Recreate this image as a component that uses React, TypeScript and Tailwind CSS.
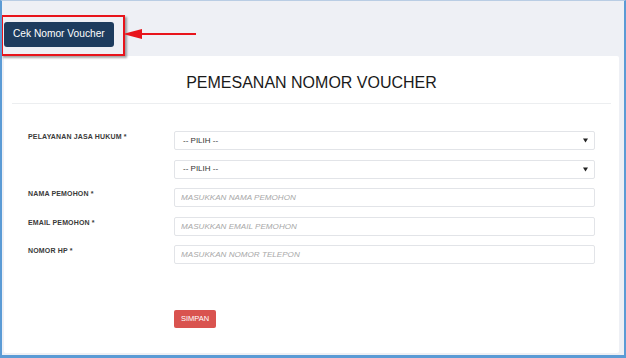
import { ChangeEvent, useState } from 'react';

const fields = [
  { label: 'NAMA PEMOHON *', placeholder: 'MASUKKAN NAMA PEMOHON' },
  { label: 'EMAIL PEMOHON *', placeholder: 'MASUKKAN EMAIL PEMOHON' },
  { label: 'NOMOR HP *', placeholder: 'MASUKKAN NOMOR TELEPON' },
];

function SelectBox() {
  return (
    <div className="h-[19px] border border-[#e2e4e8] rounded-[2px] bg-white flex items-center justify-between pl-[8px] pr-[6px]">
      <span className="text-[8px] text-[#333]">-- PILIH --</span>
      <svg width="5" height="5" viewBox="0 0 5 5">
        <path d="M0 0.5 L5 0.5 L2.5 4.5 Z" fill="#222" />
      </svg>
    </div>
  );
}

export default function App() {
  const [values, setValues] = useState<Record<string, string>>({});

  const onChange = (key: string) => (e: ChangeEvent<HTMLInputElement>) =>
    setValues({ ...values, [key]: e.target.value });

  return (
    <div className="relative w-[626px] h-[358px] flex flex-col bg-[#eef0f5] border-t border-t-[#b9cde4] border-x-2 border-b-[3px] border-[#5b9bd5] px-[2px] pb-[2px] font-['Liberation_Sans',Arial,sans-serif] overflow-hidden">
      {/* Header */}
      <div className="pt-[21px] pb-[9px] flex">
        <button className="h-[25px] px-[9px] rounded-[3px] bg-[#1d3c5e] text-white text-[10.2px] leading-none">
          Cek Nomor Voucher
        </button>
      </div>

      {/* Card */}
      <div className="flex-1 mr-[3px] bg-white rounded-[2px]">
        <div className="pt-[17px] mx-[8px] pb-[10px] border-b border-[#eceef0] text-center text-[16px] leading-[20px] text-[#1a1a1a]">
          PEMESANAN NOMOR VOUCHER
        </div>

        <div className="pt-[27px] pl-[24px] pr-[24px] flex flex-col gap-[9.5px]">
          <div className="flex">
            <div className="w-[146px] pt-[1px] text-[7px] font-bold text-[#3a3a3a] leading-[10px] tracking-[0.15px]">
              PELAYANAN JASA HUKUM *
            </div>
            <div className="flex-1">
              <SelectBox />
            </div>
          </div>
          <div className="flex">
            <div className="w-[146px]" />
            <div className="flex-1">
              <SelectBox />
            </div>
          </div>
          {fields.map((f) => (
            <div key={f.label} className="flex">
              <div className="w-[146px] pt-[1px] text-[7px] font-bold text-[#3a3a3a] leading-[10px] tracking-[0.15px]">
                {f.label}
              </div>
              <div className="flex-1">
                <input
                  value={values[f.label] ?? ''}
                  onChange={onChange(f.label)}
                  placeholder={f.placeholder}
                  className="block w-full h-[19px] border border-[#e2e4e8] rounded-[2px] px-[6px] text-[8.1px] italic text-[#333] placeholder:text-[#a8a8a8] outline-none"
                />
              </div>
            </div>
          ))}

          <div className="flex pt-[36px]">
            <div className="w-[146px]" />
            <button className="h-[18px] px-[7px] rounded-[2px] bg-[#d9534f] text-white text-[7.5px] leading-none">
              SIMPAN
            </button>
          </div>
        </div>
      </div>

      {/* Annotation overlay */}
      <div className="absolute left-[-1px] top-[14px] w-[124px] h-[41px] border-2 border-[#e8141b] shadow-[2px_2px_2px_rgba(0,0,0,0.35)]" />
      <svg className="absolute left-[118px] top-[26px]" width="80" height="14" viewBox="0 0 80 14">
        <path d="M3 7 L22 2 L22 12 Z" fill="#e8141b" />
        <line x1="20" y1="7" x2="76" y2="7" stroke="#e8141b" strokeWidth="2" />
      </svg>
    </div>
  );
}
